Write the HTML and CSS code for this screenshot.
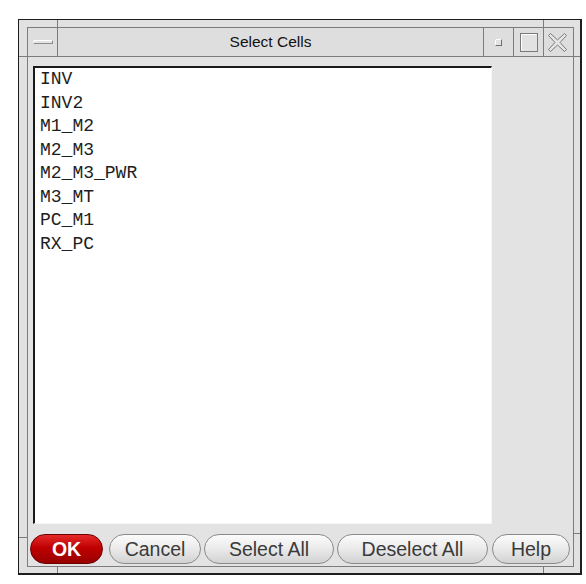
FILE: index.html
```html
<!DOCTYPE html>
<html>
<head>
<meta charset="utf-8">
<title>Select Cells</title>
<link rel="stylesheet" href="styles.css">
</head>
<body>
<div class="window">
  <div class="inner">
    <div class="titlebar">
      <div class="tb tb-menu">
        <svg width="29" height="28" viewBox="0 0 29 28">
          <rect x="5.5" y="12.5" width="19" height="3" fill="#e4e4e4" stroke="#8a8a8a"/>
          <line x1="5.5" y1="12.5" x2="24.5" y2="12.5" stroke="#fff"/>
          <line x1="5.5" y1="12.5" x2="5.5" y2="15.5" stroke="#fff"/>
        </svg>
      </div>
      <div class="title">Select Cells</div>
      <div class="tb tb-min">
        <svg width="29" height="28" viewBox="0 0 29 28">
          <rect x="11.5" y="11.5" width="6" height="6" fill="#e2e2e2" stroke="#6e6e6e"/>
          <polyline points="11.5,17.5 11.5,11.5 17.5,11.5" fill="none" stroke="#fff"/>
        </svg>
      </div>
      <div class="tb tb-max">
        <svg width="29" height="28" viewBox="0 0 29 28">
          <rect x="6.5" y="5.5" width="17" height="18" fill="#e2e2e2" stroke="#7a7a7a"/>
          <polyline points="7.5,22.5 7.5,6.5 22.5,6.5" fill="none" stroke="#fff"/>
        </svg>
      </div>
      <div class="tb tb-close">
        <svg width="29" height="28" viewBox="0 0 29 28">
          <polygon points="4.5,7.5 6.5,5.5 13.5,12 20.5,5.5 22.5,7.5 16,14.5 22.5,21.5 20.5,23.5 13.5,17 6.5,23.5 4.5,21.5 11,14.5" fill="#e6e6e6" stroke="#7a7a7a"/>
        </svg>
      </div>
    </div>
    <div class="client">
      <div class="listrow">
        <div class="listbox">
          <div class="item">INV</div>
          <div class="item">INV2</div>
          <div class="item">M1_M2</div>
          <div class="item">M2_M3</div>
          <div class="item">M2_M3_PWR</div>
          <div class="item">M3_MT</div>
          <div class="item">PC_M1</div>
          <div class="item">RX_PC</div>
        </div>
      </div>
      <div class="buttons">
        <div class="btn btn-ok">OK</div>
        <div class="btn btn-cancel">Cancel</div>
        <div class="btn btn-selall">Select All</div>
        <div class="btn btn-desel">Deselect All</div>
        <div class="btn btn-help">Help</div>
      </div>
    </div>
  </div>
  <span class="tick tick-v tick-tl"></span>
  <span class="tick tick-v tick-tr"></span>
  <span class="tick tick-h tick-lt"></span>
  <span class="tick tick-h tick-rt"></span>
  <span class="tick tick-v tick-bl"></span>
  <span class="tick tick-v tick-br"></span>
  <span class="tick tick-h tick-lb"></span>
  <span class="tick tick-h tick-rb"></span>
</div>
</body>
</html>
```
FILE: styles.css
```css
html, body {
  margin: 0;
  padding: 0;
  background: #ffffff;
}
body {
  font-family: "Liberation Sans", Arial, sans-serif;
}
.window {
  position: relative;
  margin: 19px 0 0 18px;
  width: 564px;
  height: 556px;
  box-sizing: border-box;
  border-style: solid;
  border-color: #1e1e1e;
  border-width: 1px 2px 2px 1px;
  background: #e1e1e1;
  padding: 7px 6px 6px 8px;
}
.inner {
  height: 100%;
  box-sizing: border-box;
  border: 1px solid #7c7c7c;
  display: flex;
  flex-direction: column;
}
.titlebar {
  height: 29px;
  box-sizing: border-box;
  border-bottom: 1px solid #7c7c7c;
  display: flex;
  background: #dedede;
}
.tb {
  width: 30px;
  box-sizing: border-box;
  display: flex;
}
.tb-menu { border-right: 1px solid #7c7c7c; }
.tb-min, .tb-max, .tb-close { border-left: 1px solid #7c7c7c; }
.title {
  flex: 1;
  text-align: center;
  line-height: 28px;
  font-size: 15.5px;
  color: #111;
}
.client {
  flex: 1;
  display: flex;
  flex-direction: column;
  padding: 9px 0 2px 2px;
  background: #e3e3e3;
}
.listrow {
  flex: 1;
  display: flex;
}
.listbox {
  margin-left: 3px;
  width: 459px;
  box-sizing: border-box;
  background: #ffffff;
  border-style: solid;
  border-width: 2px 1px 1px 2px;
  border-color: #1a1a1a #f6f6f6 #f6f6f6 #1a1a1a;
  padding: 0 0 0 5px;
  font-family: "Liberation Mono", "Courier New", monospace;
  font-size: 18px;
  line-height: 23.5px;
  color: #1e1e1e;
}
.buttons {
  margin-top: 10px;
  height: 30px;
  display: flex;
}
.btn {
  height: 30px;
  box-sizing: border-box;
  border-radius: 15px;
  border: 1px solid #8a8a8a;
  background: linear-gradient(#fbfbfb, #ececec 45%, #d2d2d2);
  color: #3a3a3a;
  font-size: 19.5px;
  line-height: 28px;
  text-align: center;
}
.btn-ok {
  width: 73px;
  border-color: #6a0000;
  background: linear-gradient(#e42a2a, #c00000 45%, #980000);
  color: #ffffff;
  font-weight: bold;
}
.btn-cancel { width: 92px; margin-left: 6px; }
.btn-selall { width: 130px; margin-left: 3px; }
.btn-desel { width: 151px; margin-left: 3px; }
.btn-help { width: 78px; margin-left: 4px; }

.tick {
  position: absolute;
  background: #7c7c7c;
}
.tick-v { width: 1px; }
.tick-h { height: 1px; }
.tick-tl { left: 38px; top: 0; height: 7px; }
.tick-tr { left: 524px; top: 0; height: 7px; }
.tick-lt { left: 0; top: 36px; width: 8px; }
.tick-rt { left: 555px; top: 36px; width: 6px; }
.tick-bl { left: 38px; top: 547px; height: 6px; }
.tick-br { left: 524px; top: 547px; height: 6px; }
.tick-lb { left: 0; top: 517px; width: 8px; }
.tick-rb { left: 555px; top: 513px; width: 6px; }
```
